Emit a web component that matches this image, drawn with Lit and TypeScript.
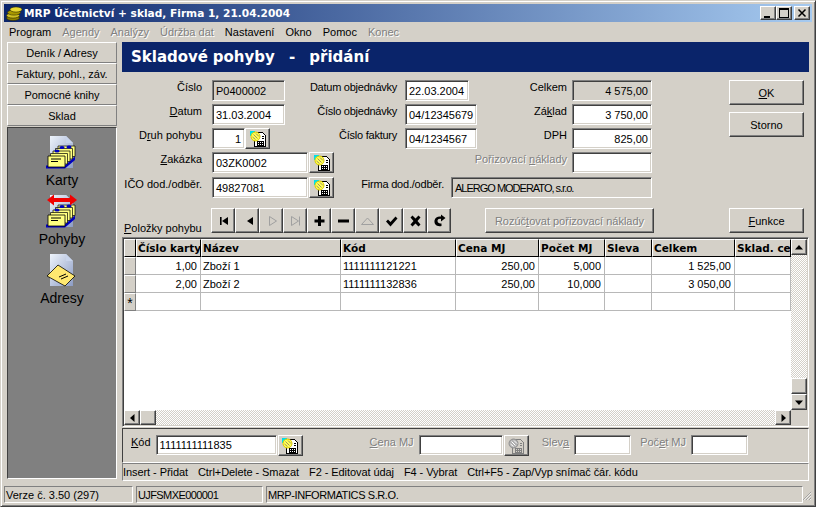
import { LitElement, html, css, svg } from "lit";
import { customElement } from "lit/decorators.js";

const lookupIcon = (off = false) => html`<svg class="ico" width="18" height="18" viewBox="0 0 18 18" shape-rendering="crispEdges">
  <path d="M5.500 2.500h8l3 3v11h-11z" fill=${off ? "#d4d0c8" : "#fff"} stroke=${off ? "#808080" : "#000"} />
  ${off ? "" : svg`<path d="M1 1h5L1 6z" fill="#00e0e8" />`}
  <circle cx="6.500" cy="6.500" r="4.500" fill=${off ? "#b0b0b0" : "#ffff50"} stroke=${off ? "#909090" : "#d8c800"} shape-rendering="auto" />
  <path d="M4.500 4.500l4 4M7 3.500l3 3M3.500 7l3 2.500" stroke=${off ? "#fff" : "#a09060"} fill="none" shape-rendering="auto" />
  <path d="M12.500 6.500h2M12.500 8.500h2" stroke=${off ? "#808080" : "#000"} />
  <path d="M8.500 11.500h6v4h-6zM10.500 11.500v4M12.500 11.500v4M8.500 13.500h6" fill="none" stroke=${off ? "#808080" : "#000"} />
</svg>`;

// cards are stacked up and to the right of the front one
const cardStack = svg`
  <path d="M2 31.500h19l10-9V26L21 34.500H2z" fill="#0000c0" />
  ${[4, 3, 2, 1].map(
    (k) => svg`<path d="M${4 + 2.5 * k} ${22 - 2.5 * k}h17v10.500h-17z" fill="#ffff80" stroke="#000" stroke-width=".7" />`,
  )}
  <ellipse cx="13" cy="17" rx="2.600" ry="1.500" fill="#0000c0" />
  <ellipse cx="18" cy="13.500" rx="2.600" ry="1.500" fill="#0000c0" />
  <ellipse cx="25" cy="13" rx="2.600" ry="1.500" fill="#0000c0" />
  <path d="M4 22h17v11H4z" fill="#ffff80" stroke="#000" stroke-width=".8" />
  <path d="M7 25h10M7 27.500h7" stroke="#000" stroke-width="1" />
`;

const pageBack = svg`
  <defs><linearGradient id="pg" x1="0" y1="0" x2="1" y2="1">
    <stop offset="0" stop-color="#eef4fc" /><stop offset="1" stop-color="#8c9cc4" />
  </linearGradient></defs>
  <path d="M6 2h16l7 7v25H6z" fill="url(#pg)" />
  <path d="M22 2v7h7z" fill="#c8d4ec" />
`;

const sideIcons: Record<string, unknown> = {
  karty: html`<svg width="36" height="36" viewBox="0 0 36 36">${pageBack}${cardStack}</svg>`,
  pohyby: html`<svg width="36" height="36" viewBox="0 0 36 36">
    ${pageBack}${cardStack}
    <path d="M3 7L10 1.500V5h16V1.500L33 7l-7 5.500V9H10v3.500z" fill="#f00000" />
  </svg>`,
  adresy: html`<svg width="36" height="36" viewBox="0 0 36 36">
    ${pageBack}
    <path d="M3 24L14 13l17 11-10 10z" fill="#ffe870" stroke="#000" stroke-width=".8" />
    <path d="M15 25l7-3M17 27l7-3" stroke="#000" stroke-width="1" />
  </svg>`,
};

const coins = html`<svg width="18" height="16" viewBox="0 0 18 16">
  <ellipse cx="7" cy="13" rx="6.500" ry="2.600" fill="#8c8000" stroke="#302c00" stroke-width=".6" />
  <ellipse cx="7" cy="10.500" rx="6.500" ry="2.600" fill="#d0c020" stroke="#302c00" stroke-width=".6" />
  <ellipse cx="8" cy="7.500" rx="6.500" ry="2.600" fill="#a89800" stroke="#302c00" stroke-width=".6" />
  <ellipse cx="10" cy="4.500" rx="6" ry="2.600" fill="#e8d830" stroke="#302c00" stroke-width=".6" />
</svg>`;

const navIcons: [string, boolean][] = [
  ["M5 4h1.600v8H5zM13 4v8L7 8z", false],
  ["M14 4v8L8 8z", false],
  ["M6.500 3.500v9L13.500 8z", true],
  ["M4.500 3.500v9l7-4.500zM12.500 3.500v9", true],
  ["M7 3h3v3.500h3.500v3H10V13H7V9.500H3.500v-3H7z", false],
  ["M3 6.500h11v3H3z", false],
  ["M2.500 11.500L8.500 5l6 6.500z", true],
  ["M3 8.500l2-2 2.500 2.500 5-5.500 2 2-7 8z", false],
  ["M3.500 4.500l2-2 3 3 3-3 2 2-3 3.500 3 3.500-2 2-3-3-3 3-2-2 3-3.500z", false],
  ["M10.500 13C5.500 14 3 11 3.500 7.500 4 4.500 7 3 10 3.500V1.500L14.500 5 10 8.500V6C8 5.500 6.500 6.500 6.500 8c0 2 2 2.500 4 2.500z", false],
];

const columns = [
  { title: "Číslo karty", right: true },
  { title: "Název" },
  { title: "Kód" },
  { title: "Cena MJ", right: true },
  { title: "Počet MJ", right: true },
  { title: "Sleva", right: true },
  { title: "Celkem", right: true },
  { title: "Sklad. ce", right: true },
];

const rows = [
  ["1,00", "Zboží 1", "1111111121221", "250,00", "5,000", "", "1 525,00", ""],
  ["2,00", "Zboží 2", "1111111132836", "250,00", "10,000", "", "3 050,00", ""],
  ["", "", "", "", "", "", "", ""],
];

@customElement("app-root")
export class AppRoot extends LitElement {
  static styles = css`
    :host {
      display: block;
      width: 816px;
      height: 507px;
      overflow: hidden;
      font: 11px "Liberation Sans", Arial, sans-serif;
      color: #000;
    }
    u { text-decoration: underline; }
    .window {
      box-sizing: border-box;
      width: 816px;
      height: 507px;
      background: #d4d0c8;
      border: 1px solid;
      border-color: #d4d0c8 #404040 #404040 #d4d0c8;
      box-shadow: inset 1px 1px 0 #fff, inset -1px -1px 0 #808080;
      padding: 3px;
      display: flex;
      flex-direction: column;
    }
    .titlebar {
      height: 18px;
      flex: none;
      display: flex;
      align-items: center;
      background: linear-gradient(90deg, #0a246a, #a6caf0);
      color: #fff;
      font: bold 10.600px "DejaVu Sans", sans-serif;
      white-space: pre;
      padding: 0 2px;
    }
    .caption { flex: 1; }
    .capbtn {
      box-sizing: border-box;
      width: 16px;
      height: 14px;
      display: flex;
    }
    .capbtn.close { margin-left: 2px; }
    .menu {
      height: 19px;
      flex: none;
      display: flex;
      align-items: center;
      gap: 11px;
      padding-left: 5px;
    }
    .off {
      color: #808080;
      text-shadow: 1px 1px 0 #fff;
    }
    .main {
      flex: 1;
      display: flex;
      min-height: 0;
      padding: 1px 0 0 3px;
    }
    .side {
      width: 110px;
      flex: none;
      display: flex;
      flex-direction: column;
      margin-right: 5px;
    }
    .tab {
      height: 21px;
      flex: none;
      box-sizing: border-box;
      display: flex;
      align-items: center;
      justify-content: center;
      padding-top: 1px;
    }
    .raised {
      box-sizing: border-box;
      background: #d4d0c8;
      border: 1px solid;
      border-color: #fff #404040 #404040 #fff;
      box-shadow: inset -1px -1px 0 #808080;
    }
    .tab.raised {
      border-color: #fff #808080 #808080 #fff;
      box-shadow: none;
    }
    .tray {
      margin-top: 1px;
      height: 352px;
      box-sizing: border-box;
      background: #808080;
      border: 1px solid;
      border-color: #404040 #fff #fff #404040;
      display: flex;
      flex-direction: column;
      align-items: center;
      padding-top: 6px;
    }
    .tool {
      height: 59px;
      display: flex;
      flex-direction: column;
      align-items: center;
      font-size: 14px;
      line-height: 16px;
    }
    .tool svg { margin-bottom: 2px; }
    .content {
      width: 687px;
      flex: none;
      display: flex;
      flex-direction: column;
    }
    .banner {
      height: 30px;
      flex: none;
      background: #0a246a;
      color: #fff;
      font: bold 15px "DejaVu Sans", sans-serif;
      word-spacing: -0.500px;
      white-space: pre;
      display: flex;
      align-items: center;
      padding-left: 9px;
    }
    .form {
      display: grid;
      grid-template-columns: 90px 121px 72px 72px 95px 80px 77px 75px;
      grid-template-rows: 24px 24px 24px 25px 21px;
      margin-top: 8px;
      flex: none;
    }
    .lab {
      justify-self: end;
      white-space: nowrap;
      line-height: 14px;
    }
    .lab.a { padding-right: 10px; }
    .lab.b { padding-right: 8px; letter-spacing: -0.250px; }
    .lab.c { padding-right: 5px; }
    .field {
      box-sizing: border-box;
      height: 21px;
      background: #fff;
      border: 1px solid;
      border-color: #808080 #fff #fff #808080;
      box-shadow: inset 1px 1px 0 #404040, inset -1px -1px 0 #d4d0c8;
      padding: 0 3px;
      display: flex;
      align-items: center;
      white-space: nowrap;
      flex: none;
    }
    .field.ro { background: #d4d0c8; }
    .field.num { justify-content: flex-end; }
    .caps { letter-spacing: -1px; }
    .w32 { width: 33px; }
    .w63 { width: 64px; }
    .w73 { width: 73px; }
    .w72 { width: 72px; }
    .w80 { width: 80px; }
    .w95 { width: 96px; }
    .w200 { width: 201px; }
    .pair { display: flex; }
    .lookup {
      width: 25px;
      height: 21px;
      flex: none;
      display: flex;
      align-items: center;
      justify-content: center;
      margin-left: 1px;
    }
    .pair .lookup.tight { margin-left: 0; width: 25px; }
    .firma {
      grid-column: 3 / 7;
      display: flex;
      justify-content: flex-end;
      gap: 7px;
      align-items: flex-start;
    }
    .firma .lab { letter-spacing: -0.200px; }
    .actions {
      grid-column: 8;
      grid-row: 1 / span 3;
      display: flex;
      flex-direction: column;
      gap: 7px;
    }
    .btn {
      height: 25px;
      display: flex;
      align-items: center;
      justify-content: center;
      flex: none;
    }
    .toolbar {
      display: flex;
      align-items: flex-end;
      margin-top: 10px;
      height: 25px;
      flex: none;
    }
    .items {
      width: 89px;
      padding-left: 2px;
      box-sizing: border-box;
      white-space: nowrap;
      line-height: 13px;
      margin-bottom: -2px;
    }
    .nav {
      display: flex;
      width: 274px;
    }
    .nav .raised {
      width: 24px;
      height: 25px;
      display: flex;
      align-items: center;
      justify-content: center;
    }
    .split { width: 169px; }
    .funkce {
      width: 75px;
      margin-left: 75px;
    }
    .gridbox {
      margin-top: 4px;
      height: 190px;
      flex: none;
      box-sizing: border-box;
      border: 1px solid;
      border-color: #808080 #fff #fff #808080;
      box-shadow: inset 1px 1px 0 #404040, inset -1px -1px 0 #d4d0c8;
      padding: 1px;
      display: grid;
      grid-template-columns: 667px 16px;
      grid-template-rows: 171px 15px;
    }
    .table {
      background: #fff;
      display: grid;
      grid-template-columns: 12px 65px 140px 115px 83px 66px 47px 83px 56px;
      grid-auto-rows: 18px;
      align-content: start;
      overflow: hidden;
    }
    .hd, .ind {
      box-sizing: border-box;
      background: #d4d0c8;
      border-top: 1px solid #fff;
      border-left: 1px solid #fff;
      border-right: 1px solid #000;
      border-bottom: 1px solid #000;
      white-space: nowrap;
      overflow: hidden;
      display: flex;
      align-items: center;
    }
    .hd {
      font: bold 10.500px "DejaVu Sans", sans-serif;
      padding-left: 1px;
    }
    .ind {
      border-right: 1px solid #808080;
      border-bottom: 1px solid #808080;
      justify-content: center;
      align-items: flex-start;
      font-size: 14px;
      line-height: 13px;
      padding-top: 3px;
    }
    .cell {
      box-sizing: border-box;
      border-right: 1px solid #b8b8b8;
      border-bottom: 1px solid #b8b8b8;
      display: flex;
      align-items: center;
      padding: 0 3px 0 2px;
      white-space: nowrap;
      overflow: hidden;
    }
    .cell.right { justify-content: flex-end; }
    .vscroll {
      display: flex;
      flex-direction: column;
    }
    .hscroll { display: flex; }
    .dither {
      flex: 1;
      background: repeating-conic-gradient(#d4d0c8 0 25%, #fff 0 50%) 0 0 / 2px 2px;
    }
    .sb {
      width: 16px;
      height: 16px;
      flex: none;
      display: flex;
      align-items: center;
      justify-content: center;
    }
    .hscroll .sb { height: 15px; }
    .corner { background: #d4d0c8; }
    .entry {
      margin-top: 1px;
      height: 35px;
      flex: none;
      box-sizing: border-box;
      border: 1px solid;
      border-color: #404040 #fff #fff #404040;
      display: flex;
      align-items: flex-start;
      padding: 6px 0 0 8px;
    }
    .entry .lab { padding-right: 5px; }
    .entry .field { height: 20px; }
    .entry .lookup { height: 21px; margin-left: 1px; }
    .cena { width: 84px; }
    .kodin { width: 121px; }
    .sleva { width: 57px; }
    .pocet { width: 57px; }
    .lab.sl { margin-left: 13px; }
    .lab.po { margin-left: 9px; }
    .entry .kod { margin-right: 67px; }
    .hints {
      height: 18px;
      flex: none;
      box-sizing: border-box;
      border: 1px solid;
      border-color: #808080 #fff #fff #808080;
      display: flex;
      align-items: center;
      gap: 10px;
      white-space: nowrap;
      letter-spacing: -0.070px;
    }
    .status {
      flex: none;
      height: 17px;
      margin-top: 5px;
      display: flex;
      gap: 3px;
    }
    .pane {
      box-sizing: border-box;
      border: 1px solid;
      border-color: #808080 #fff #fff #808080;
      display: flex;
      align-items: center;
      white-space: nowrap;
      padding-left: 1px;
    }
    .p1 { width: 129px; }
    .p2 { width: 127px; letter-spacing: -0.600px; }
    .p3 { flex: 1; letter-spacing: -0.400px; }
    .grip { width: 9px; flex: none; margin-left: -3px; }
  `;

  private fieldLabel(text: unknown, cls: string, col: number, row: number) {
    return html`<div class="lab ${cls}" style="grid-column:${col};grid-row:${row}">${text}</div>`;
  }

  render() {
    return html`
      <div class="window">
        <div class="titlebar">
          ${coins}
          <span class="caption">MRP Účetnictví + sklad, Firma 1, 21.04.2004</span>
          <div class="capbtn raised"><svg width="14" height="12" viewBox="0 0 14 12" shape-rendering="crispEdges"><path d="M3 9h6v2H3z" /></svg></div>
          <div class="capbtn raised"><svg width="14" height="12" viewBox="0 0 14 12" shape-rendering="crispEdges"><path d="M2 1h10v10H2zM3 3v7h8V3z" fill-rule="evenodd" /></svg></div>
          <div class="capbtn raised close"><svg width="14" height="12" viewBox="0 0 14 12"><path d="M3.500 2.500l7 7M10.500 2.500l-7 7" stroke="#000" stroke-width="1.500" /></svg></div>
        </div>
        <div class="menu">
          <span>Program</span>
          <span class="off">Agendy</span>
          <span class="off">Analýzy</span>
          <span class="off">Údržba dat</span>
          <span>Nastavení</span>
          <span>Okno</span>
          <span>Pomoc</span>
          <span class="off">Konec</span>
        </div>
        <div class="main">
          <div class="side">
            <div class="tab raised">Deník / Adresy</div>
            <div class="tab raised">Faktury, pohl., záv.</div>
            <div class="tab raised">Pomocné knihy</div>
            <div class="tab raised">Sklad</div>
            <div class="tray">
              <div class="tool">${sideIcons.karty}<span>Karty</span></div>
              <div class="tool">${sideIcons.pohyby}<span>Pohyby</span></div>
              <div class="tool">${sideIcons.adresy}<span>Adresy</span></div>
            </div>
          </div>
          <div class="content">
            <div class="banner">Skladové pohyby   -   přidání</div>
            <div class="form">
              ${this.fieldLabel("Číslo", "a", 1, 1)}
              <div class="pair" style="grid-column:2;grid-row:1"><div class="field ro w73">P0400002</div></div>
              ${this.fieldLabel(html`<u>D</u>atum`, "a", 1, 2)}
              <div class="pair" style="grid-column:2;grid-row:2"><div class="field w73">31.03.2004</div></div>
              ${this.fieldLabel(html`D<u>r</u>uh pohybu`, "a", 1, 3)}
              <div class="pair" style="grid-column:2;grid-row:3"><div class="field num w32">1</div><div class="lookup raised tight">${lookupIcon()}</div></div>
              ${this.fieldLabel(html`<u>Z</u>akázka`, "a", 1, 4)}
              <div class="pair" style="grid-column:2;grid-row:4"><div class="field w95">03ZK0002</div><div class="lookup raised">${lookupIcon()}</div></div>
              ${this.fieldLabel("IČO dod./odběr.", "a", 1, 5)}
              <div class="pair" style="grid-column:2;grid-row:5"><div class="field w95">49827081</div><div class="lookup raised">${lookupIcon()}</div></div>

              ${this.fieldLabel("Datum objednávky", "b", 3, 1)}
              <div class="pair" style="grid-column:4;grid-row:1"><div class="field w63">22.03.2004</div></div>
              ${this.fieldLabel("Číslo objednávky", "b", 3, 2)}
              <div class="pair" style="grid-column:4;grid-row:2"><div class="field w72">04/12345679</div></div>
              ${this.fieldLabel("Číslo faktury", "b", 3, 3)}
              <div class="pair" style="grid-column:4;grid-row:3"><div class="field w72">04/1234567</div></div>

              ${this.fieldLabel("Celkem", "c", 5, 1)}
              <div class="pair" style="grid-column:6;grid-row:1"><div class="field ro num w80">4 575,00</div></div>
              ${this.fieldLabel(html`Zá<u>k</u>lad`, "c", 5, 2)}
              <div class="pair" style="grid-column:6;grid-row:2"><div class="field num w80">3 750,00</div></div>
              ${this.fieldLabel("DPH", "c", 5, 3)}
              <div class="pair" style="grid-column:6;grid-row:3"><div class="field num w80">825,00</div></div>
              ${this.fieldLabel(html`<span class="off">Pořizovací <u>n</u>áklady</span>`, "c", 5, 4)}
              <div class="pair" style="grid-column:6;grid-row:4"><div class="field num w80"></div></div>

              <div class="firma" style="grid-row:5">
                <div class="lab">Firma dod./odběr.</div>
                <div class="field ro w200 caps">ALERGO MODERATO, s.r.o.</div>
              </div>

              <div class="actions">
                <div class="btn raised"><span><u>O</u>K</span></div>
                <div class="btn raised">Storno</div>
              </div>
            </div>
            <div class="toolbar">
              <div class="items"><u>P</u>oložky pohybu</div>
              <div class="nav">
                ${navIcons.map(
                  ([d, off]) => html`<div class="raised"><svg width="16" height="16" viewBox="0 0 16 16">
                    <path d=${d} fill=${off ? "#d4d0c8" : "#000"} stroke=${off ? "#a0a0a0" : "none"} />
                  </svg></div>`,
                )}
              </div>
              <div class="btn raised split"><span class="off">Rozúč<u>t</u>ovat pořizovací náklady</span></div>
              <div class="btn raised funkce"><span><u>F</u>unkce</span></div>
            </div>
            <div class="gridbox">
              <div class="table">
                <div class="hd"></div>
                ${columns.map((c) => html`<div class="hd">${c.title}</div>`)}
                ${rows.map(
                  (r, i) => html`<div class="ind">${i === 2 ? "*" : ""}</div>
                    ${r.map(
                      (v, j) => html`<div class="cell ${columns[j].right ? "right" : ""}">${v}</div>`,
                    )}`,
                )}
              </div>
              <div class="vscroll">
                <div class="sb raised"><svg width="8" height="5"><path d="M4 0l4 4.500H0z" /></svg></div>
                <div class="dither"></div>
                <div class="sb raised"></div>
                <div class="sb raised"><svg width="8" height="5"><path d="M4 5L8 .5H0z" /></svg></div>
              </div>
              <div class="hscroll">
                <div class="sb raised"><svg width="5" height="8"><path d="M0 4l4.500-4v8z" /></svg></div>
                <div class="sb raised"></div>
                <div class="dither"></div>
                <div class="sb raised"><svg width="5" height="8"><path d="M5 4L.5 0v8z" /></svg></div>
              </div>
              <div class="corner"></div>
            </div>
            <div class="entry">
              <div class="lab"><u>K</u>ód</div>
              <div class="field kodin">1111111111835</div>
              <div class="lookup raised kod">${lookupIcon()}</div>
              <div class="lab off"><u>C</u>ena MJ</div>
              <div class="field cena"></div>
              <div class="lookup raised">${lookupIcon(true)}</div>
              <div class="lab off sl"><span>Slev<u>a</u></span></div>
              <div class="field sleva"></div>
              <div class="lab off po">Poč<u>e</u>t MJ</div>
              <div class="field pocet"></div>
            </div>
            <div class="hints">
              <span>Insert - Přidat</span>
              <span>Ctrl+Delete - Smazat</span>
              <span>F2 - Editovat údaj</span>
              <span>F4 - Vybrat</span>
              <span>Ctrl+F5 - Zap/Vyp snímač čár. kódu</span>
            </div>
          </div>
        </div>
        <div class="status">
          <div class="pane p1">Verze č. 3.50 (297)</div>
          <div class="pane p2">UJFSMXE000001</div>
          <div class="pane p3">MRP-INFORMATICS S.R.O.</div>
          <svg class="grip" width="12" height="17" viewBox="0 0 12 17"><path d="M11 5L0 16M11 9l-7 7M11 13l-3 3" stroke="#808080" fill="none" /><path d="M11 6L1 16M11 10l-6 6M11 14l-2 2" stroke="#fff" fill="none" /></svg>
        </div>
      </div>
    `;
  }
}
